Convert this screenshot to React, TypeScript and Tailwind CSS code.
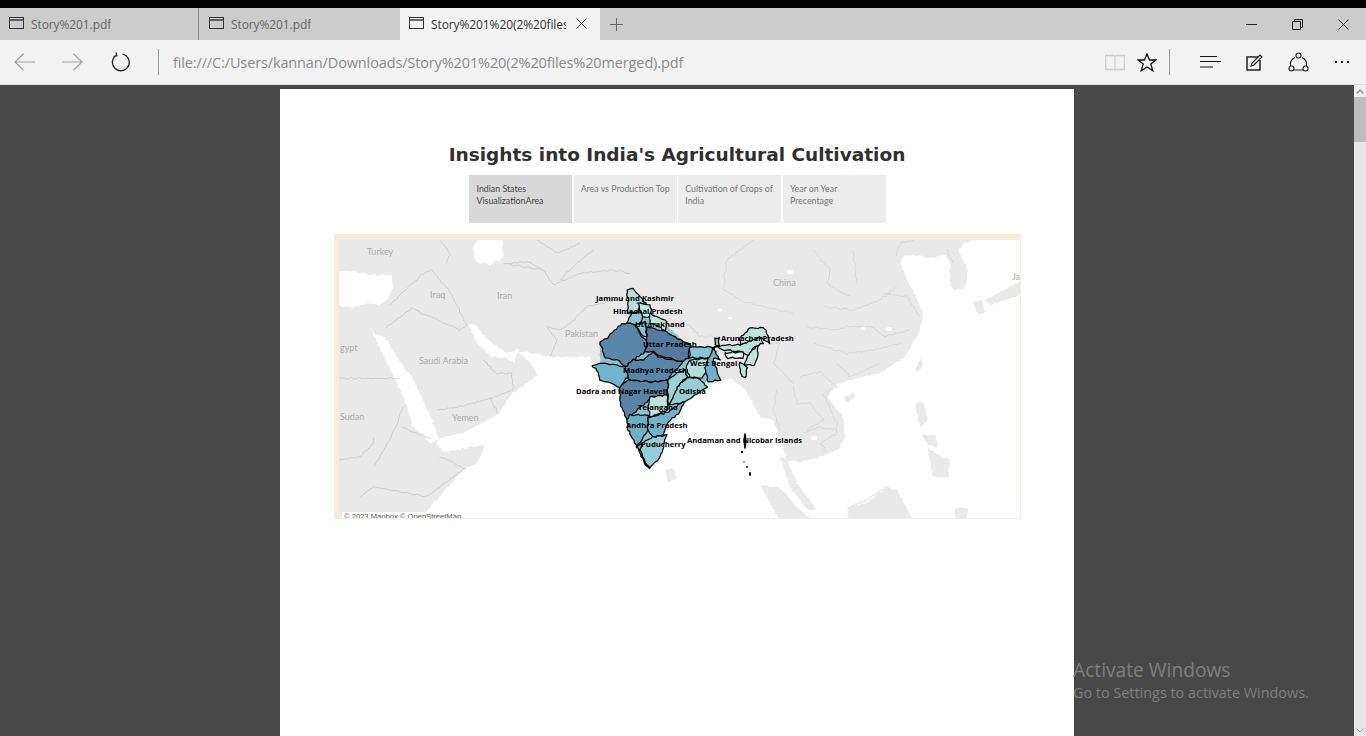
// breaks edges into short steps and pushes them through a smooth field, so coasts look hand traced
function wiggle(pts: string, amp = 1, ox = 0, oy = 0, k = 1) {
  const p = pts.split(' ').map(s => {
    const [x, y] = s.split(',').map(Number)
    return [ox + x * k, oy + y * k]
  })
  const out: string[] = []
  for (let i = 0; i < p.length - 1; i++) {
    const [x1, y1] = p[i]
    const [x2, y2] = p[i + 1]
    const n = Math.max(1, Math.round(Math.hypot(x2 - x1, y2 - y1) / 2.5))
    for (let j = 0; j < n; j++) {
      const x = x1 + ((x2 - x1) * j) / n
      const y = y1 + ((y2 - y1) * j) / n
      const dx = Math.sin(x * 1.3 + y * 0.7) + 0.6 * Math.sin(y * 2.1 - x * 0.4)
      const dy = Math.cos(y * 1.1 - x * 0.8) + 0.6 * Math.cos(x * 1.9 + y * 0.3)
      out.push(`${(x + dx * amp * 0.6).toFixed(1)},${(y + dy * amp * 0.6).toFixed(1)}`)
    }
  }
  const [lx, ly] = p[p.length - 1]
  out.push(`${lx},${ly}`)
  return out.join(' ')
}

const closed = (pts: string) => `${pts} ${pts.split(' ')[0]}`

const indiaBacking = '630,295 650,310 665,325 690,347 715,350 708,380 685,402 668,423 663,437 650,466 640,450 627,420 620,390 600,375 600,345 627,325'

const states: { fill: string; pts: string }[] = [
  { fill: '#b6dfdb', pts: '627,290 633,288 640,297 647,305 640,303 638,312 628,313 628,300' },
  { fill: '#c4e6e1', pts: '638,303 650,305 652,317 642,317' },
  { fill: '#8fc6d2', pts: '627,323 632,313 642,312 642,322 637,325' },
  { fill: '#c0e4df', pts: '650,313 667,322 665,330 650,323' },
  { fill: '#8cc3d0', pts: '635,325 645,322 647,337 642,335' },
  { fill: '#5b86a7', pts: '600,342 607,338 620,325 627,323 635,325 642,337 647,340 645,352 633,360 625,367 617,360 605,358' },
  { fill: '#557a9d', pts: '647,327 667,332 690,345 688,358 682,362 658,355 653,352 645,352 647,343' },
  { fill: '#5a85a6', pts: '628,377 625,367 633,360 643,360 653,352 658,357 683,362 673,373 668,380 653,382 628,380' },
  { fill: '#72b4cb', pts: '592,366 600,363 617,365 625,367 628,377 620,387 610,383 600,380 597,370' },
  { fill: '#5a83a4', pts: '620,387 628,380 653,382 668,380 668,395 653,397 637,410 630,417 627,420 620,403' },
  { fill: '#bfe2dd', pts: '650,397 667,395 668,410 650,417 648,405' },
  { fill: '#70aec6', pts: '627,420 630,415 648,415 648,430 642,440 637,447 628,430' },
  { fill: '#74b2c9', pts: '648,418 668,412 685,400 680,412 667,423 663,435 653,437 648,430' },
  { fill: '#99cdd6', pts: '642,443 653,437 667,435 660,457 650,468 645,462 640,450' },
  { fill: '#72b0c6', pts: '637,447 642,443 640,450 645,462 650,468 646,466' },
  { fill: '#9ed0d6', pts: '668,380 677,373 685,370 687,377 677,387 673,400 668,405' },
  { fill: '#99ccd4', pts: '677,387 687,378 698,378 707,387 685,402 670,405' },
  { fill: '#8cc3d0', pts: '690,347 715,347 712,358 690,358' },
  { fill: '#b4dfdc', pts: '686,368 690,360 712,358 708,367 702,378 690,377' },
  { fill: '#6faec6', pts: '713,348 720,360 713,358 720,380 708,382 705,368' },
  { fill: '#8cc3d0', pts: '715,338 719,338 719,345 715,345' },
  { fill: '#bbe3de', pts: '715,347 725,345 740,345 760,337 763,343 755,347 748,355 743,352 725,350' },
  { fill: '#c0e5df', pts: '740,345 740,338 750,328 765,328 770,343 760,337' },
  { fill: '#e6f3f1', pts: '725,353 743,352 743,358 727,358' },
  { fill: '#c4e6e1', pts: '748,355 758,345 758,353 755,365 745,365' },
  { fill: '#bbe3de', pts: '740,362 748,367 745,378 742,377 740,370' },
]

const seas = [
  '440,438 463,433 497,415 513,393 538,375 530,362 518,352 527,352 550,357 590,357 593,365 600,370 622,400 640,450 650,470 665,435 685,400 708,385 720,382 730,378 743,387 748,395 760,417 773,420 777,430 787,460 800,462 817,458 837,450 845,437 843,417 827,397 835,385 850,380 880,373 905,357 920,330 923,313 915,295 907,280 900,262 905,256 915,255 930,258 945,255 950,263 950,280 953,290 965,288 968,270 958,250 965,243 973,240 985,230 1030,230 1030,530 418,530 423,518 430,507 463,470 477,463 485,445 443,452 437,443',
  '330,272 350,271 375,275 392,275 393,288 386,300 380,305 368,303 352,308 330,303',
  '369,325 375,335 385,337 400,362 412,377 425,405 437,432 438,440 430,443 412,425 405,400 393,375',
  '473,250 480,232 503,232 503,258 490,265 476,262',
  '468,323 476,326 490,342 504,352 515,352 518,348 515,362 505,358 492,357 478,345',
]

const islands = [
  '973,302 982,300 985,312 978,315',
  '985,300 1000,292 1030,276 1030,292 1005,300 990,305',
  '915,370 921,358 923,363 918,372',
  '843,398 855,392 855,397 847,403',
  '915,403 923,402 928,420 920,427',
  '922,435 935,435 938,447 928,445',
  '927,447 943,457 950,460 948,477 933,477',
  '847,507 867,503 887,487 897,490 918,530 850,530',
  '760,485 780,488 800,510 823,530 785,530',
  '780,457 787,460 797,483 817,510 808,510 790,487',
  '665,470 673,468 677,478 668,482',
  '955,508 968,508 965,530 955,530',
]

const westBorders = [
  '180,225 215,190 280,130 305,120 360,185 410,285',
  '165,295 245,235 390,300 410,285',
  '520,100 640,120 670,165 750,130 850,120 900,130',
  '650,290 690,300 720,280 770,230 880,205',
  '650,290 680,330 660,380',
  '28,445 205,445',
  '130,620 130,640 90,680 28,690',
  '130,710 180,630 220,530',
  '210,590 300,625',
  '330,680 405,715 290,800 130,770 90,800',
  '320,540 390,530 480,505 550,480 545,430 500,430 460,390',
  '480,505 505,550',
  '330,30 360,70 350,100',
  '540,100 590,95 640,120',
  '790,60 740,100 690,150',
  '620,30 680,70 750,40',
]

const eastBorders = [
  '0,265 30,290 60,320 110,320',
  '270,340 300,340 280,400 340,460',
  '290,480 280,540 300,600',
  '360,440 420,425 470,470 430,490 470,580 470,610 420,640 440,665',
  '370,610 420,590 460,600',
  '340,470 350,520 390,520 430,570 380,600',
  '140,90 180,60 220,30',
  '140,90 130,180 190,215 340,250',
  '400,60 450,120 440,160 510,200',
  '520,60 530,160',
  '430,230 520,240 600,210 650,170',
  '380,290 470,300 500,290 580,290 610,320 690,300',
  '400,340 500,370 580,360 660,340',
  '470,400 510,440 600,400',
  '610,190 680,200 720,260',
  '650,80 660,40 700,30',
  '800,60 820,100',
  '510,830 560,810 620,770',
]

const labels: { text: string; cls: string }[] = [
  { text: 'Jammu and Kashmir', cls: 'left-[257px] top-[53px]' },
  { text: 'Himachal Pradesh', cls: 'left-[274px] top-[66px]' },
  { text: 'Uttarakhand', cls: 'left-[296px] top-[79px]' },
  { text: 'Uttar Pradesh', cls: 'left-[304px] top-[99px]' },
  { text: 'Arunachal Pradesh', cls: 'left-[382px] top-[93px]' },
  { text: 'West Bengal', cls: 'left-[351px] top-[118px]' },
  { text: 'Madhya Pradesh', cls: 'left-[284px] top-[125px]' },
  { text: 'Odisha', cls: 'left-[340px] top-[146px]' },
  { text: 'Dadra and Nagar Haveli', cls: 'left-[237px] top-[146px]' },
  { text: 'Telangana', cls: 'left-[299px] top-[162px]' },
  { text: 'Andhra Pradesh', cls: 'left-[287px] top-[180px]' },
  { text: 'Puducherry', cls: 'left-[302px] top-[199px]' },
  { text: 'Andaman and Nicobar Islands', cls: 'left-[348px] top-[195px]' },
]

const countries: { text: string; cls: string }[] = [
  { text: 'Turkey', cls: 'left-[28px] top-[6px]' },
  { text: 'Iraq', cls: 'left-[91px] top-[49px]' },
  { text: 'Iran', cls: 'left-[158px] top-[50px]' },
  { text: 'Pakistan', cls: 'left-[226px] top-[88px]' },
  { text: 'gypt', cls: 'left-[1px] top-[102px]' },
  { text: 'Saudi Arabia', cls: 'left-[80px] top-[115px]' },
  { text: 'Sudan', cls: 'left-[1px] top-[171px]' },
  { text: 'Yemen', cls: 'left-[113px] top-[172px]' },
  { text: 'China', cls: 'left-[434px] top-[37px]' },
  { text: 'Ja', cls: 'left-[673px] top-[31px]' },
]

function TabIcon() {
  return (
    <svg width="15" height="12" viewBox="0 0 15 12" className="shrink-0 -mt-[2px]">
      <rect x="0.5" y="0.5" width="14" height="11" fill="none" stroke="#333" />
      <path d="M1 3h13" stroke="#333" strokeWidth="1.4" />
    </svg>
  )
}

function Tab({ title, active, divider }: { title: string; active?: boolean; divider?: boolean }) {
  return (
    <div className={`flex items-center h-8 ${active ? 'w-[200px] pl-[9px] bg-[#f2f2f2] text-[#333]' : 'text-[#666]'} ${divider ? 'w-[202px] pl-[10px] border-l border-[#8a8a8a]' : ''} ${!active && !divider ? 'w-[198px] pl-[9px]' : ''}`}>
      <TabIcon />
      <span className={`ml-[7px] mt-[2px] text-[12px] tracking-[-0.1px] whitespace-nowrap overflow-hidden ${active ? 'w-[135px]' : ''}`}>{title}</span>
      {active && (
        <svg width="11" height="11" viewBox="0 0 11 11" className="ml-[10px] -mt-[1px]">
          <path d="M.5.5l10 10M10.5.5l-10 10" stroke="#444" />
        </svg>
      )}
    </div>
  )
}

function MapArea() {
  return (
    <div className="relative w-[687px] h-[285px] mt-[11px] ml-[54px] border-r border-b border-[#f5ecdc] border-t-[6px] border-l-[5px] overflow-hidden bg-white">
      <svg className="block w-[681px] h-[278px]" viewBox="339 240 681 278">
        <rect x="339" y="240" width="681" height="278" fill="#e9e9e9" />
        <g className="blur-[0.5px]">
          <g fill="#fff">
            {seas.map((s, i) => (
              <polygon key={i} points={wiggle(closed(s), 1.2)} />
            ))}
            <ellipse cx="720" cy="310" rx="2.5" ry="1.5" />
            <ellipse cx="730" cy="318" rx="2.5" ry="1" />
            <ellipse cx="790" cy="272" rx="3" ry="2" />
            <ellipse cx="863" cy="328" rx="2" ry="2" />
            <ellipse cx="889" cy="329" rx="3" ry="2" />
            <ellipse cx="814" cy="438" rx="3" ry="2" />
          </g>
          <g fill="#e9e9e9">
            {islands.map((s, i) => (
              <polygon key={i} points={wiggle(closed(s), 1)} />
            ))}
          </g>
          <g fill="none" stroke="#c0c0c0" strokeWidth="0.7">
            {westBorders.map((s, i) => (
              <polyline key={i} points={wiggle(s, 0.9, 330, 230, 1 / 3)} />
            ))}
          </g>
          <g fill="none" stroke="#cdcdcd" strokeWidth="0.7">
            {eastBorders.map((s, i) => (
              <polyline key={i} points={wiggle(s, 1.1, 680, 230, 1 / 3)} />
            ))}
          </g>
        </g>
        {/* India */}
        <polygon points={wiggle(closed(indiaBacking), 0.9)} fill="#8cc3d0" />
        <g stroke="#000" strokeWidth="1.2" strokeLinejoin="round">
          {states.map((s, i) => (
            <polygon key={i} points={wiggle(closed(s.pts), 0.9)} fill={s.fill} />
          ))}
        </g>
        <g fill="#000">
          <ellipse cx="745" cy="441" rx="1.4" ry="8" />
          <circle cx="742" cy="452" r="1.2" />
          <circle cx="744" cy="462" r="0.7" />
          <circle cx="747" cy="467" r="0.9" />
          <ellipse cx="750" cy="474" rx="1.2" ry="2" />
        </g>
      </svg>
      {countries.map(c => (
        <span key={c.text} className={`absolute ${c.cls} font-['Lato',sans-serif] text-[9px] leading-3 text-[#ababab] whitespace-nowrap`}>
          {c.text}
        </span>
      ))}
      {labels.map(l => (
        <span key={l.text} className={`absolute ${l.cls} font-['Open_Sans',sans-serif] font-bold text-[7.7px] leading-[10px] text-black whitespace-nowrap`}>
          {l.text}
        </span>
      ))}
      <span className="absolute left-[3px] top-[272px] bg-white pl-[2px] pr-[3px] font-['Liberation_Sans',sans-serif] text-[7.6px] leading-[10px] text-[#555] whitespace-nowrap">
        © 2023 Mapbox © OpenStreetMap
      </span>
    </div>
  )
}

export default function App() {
  return (
    <div className="relative flex flex-col w-[1366px] h-[736px] overflow-hidden bg-[#484848] font-['Open_Sans',sans-serif]">
      <div className="h-2 bg-black" />

      {/* tab strip */}
      <div className="flex items-center h-8 bg-[#cccccc]">
        <Tab title="Story%201.pdf" />
        <Tab title="Story%201.pdf" divider />
        <Tab title="Story%201%20(2%20files%20merged).pdf" active />
        <svg width="13" height="13" viewBox="0 0 13 13" className="ml-[10px]">
          <path d="M6.5 0v13M0 6.5h13" stroke="#666" />
        </svg>
        <div className="flex ml-auto">
          <div className="flex items-center justify-center w-[46px] h-8">
            <svg width="11" height="11" viewBox="0 0 11 11"><path d="M0 5.5h11" stroke="#222" /></svg>
          </div>
          <div className="flex items-center justify-center w-[46px] h-8">
            <svg width="11" height="11" viewBox="0 0 11 11" fill="none" stroke="#222"><path d="M.5 2.500h8v8h-8zM2.500 2.500v-2h8v8h-2" /></svg>
          </div>
          <div className="flex items-center justify-center w-[46px] h-8">
            <svg width="11" height="11" viewBox="0 0 11 11"><path d="M.5.5l10 10M10.5.5l-10 10" stroke="#222" /></svg>
          </div>
        </div>
      </div>

      {/* address bar */}
      <div className="flex items-center h-[45px] bg-[#f2f2f2] border-b border-[#dcdcdc]">
        <div className="flex items-center justify-center w-12">
          <svg width="21" height="18" viewBox="0 0 21 18" fill="none" stroke="#a0a0a0" strokeWidth="1.2"><path d="M21 9H1M9.500 .8L1 9l8.500 8.200" /></svg>
        </div>
        <div className="flex items-center justify-center w-12">
          <svg width="21" height="18" viewBox="0 0 21 18" fill="none" stroke="#a0a0a0" strokeWidth="1.2"><path d="M0 9h20M11.500 .8L20 9l-8.500 8.200" /></svg>
        </div>
        <div className="flex items-center justify-center w-12">
          <svg width="20" height="20" viewBox="0 0 20 20" fill="none" stroke="#222" strokeWidth="1.3"><path d="M6.500 3.200A8.400 8.400 0 1 0 12.500 2.200M6 .5l.8 3.300-3.300.8" /></svg>
        </div>
        <div className="w-px h-[26px] ml-[14px] bg-[#9a9a9a]" />
        <span className="ml-[14px] mt-[2px] text-[14.5px] tracking-[-0.13px] text-[#8a8a8a] whitespace-nowrap">file:///C:/Users/kannan/Downloads/Story%201%20(2%20files%20merged).pdf</span>
        <div className="flex items-center ml-auto pr-[2px]">
          <div className="flex items-center justify-center w-8">
            <svg width="20" height="17" viewBox="0 0 20 17" fill="none" stroke="#cfcfcf" strokeWidth="1.3"><path d="M.6 1.500h8.200l1.200 1 1.200-1h8.200v14H11.200l-1.200 1-1.200-1H.6zM10 2.500v13" /></svg>
          </div>
          <div className="flex items-center justify-center w-8">
            <svg width="20" height="19" viewBox="0 0 20 19" fill="none" stroke="#111" strokeWidth="1.3"><path d="M10 1l2.500 6h6.500l-5.200 4 2 6.800L10 14l-5.800 3.800 2-6.800L1 7h6.500z" /></svg>
          </div>
          <div className="w-px h-[26px] ml-[6px] bg-[#9a9a9a]" />
          <div className="flex items-center justify-center w-11 ml-[18px]">
            <svg width="21" height="14" viewBox="0 0 21 14" stroke="#111" strokeWidth="1.2"><path d="M0 1.500h17M0 6.500h21M0 12h13" /></svg>
          </div>
          <div className="flex items-center justify-center w-11">
            <svg width="17" height="17" viewBox="0 0 17 17" fill="none" stroke="#222"><path d="M12 3H1v13h13V6" strokeWidth="1.500" /><path d="M5 12l1-3 8-8 2 2-8 8z" fill="#f2f2f2" strokeWidth="1.200" /></svg>
          </div>
          <div className="flex items-center justify-center w-11">
            <svg width="21" height="21" viewBox="0 0 21 21" fill="none" stroke="#222" strokeWidth="1.100"><path d="M7 5.500a8 8 0 0 0-4.500 8.500M18.500 14A8 8 0 0 0 14 5.500M6 18h9" /><circle cx="10.500" cy="3.500" r="2.500" /><circle cx="3.500" cy="16.500" r="2.500" /><circle cx="17.500" cy="16.500" r="2.500" /></svg>
          </div>
          <div className="flex items-center justify-center w-11 gap-[4px]">
            <div className="w-[2px] h-[2px] bg-[#222]" />
            <div className="w-[2px] h-[2px] bg-[#222]" />
            <div className="w-[2px] h-[2px] bg-[#222]" />
          </div>
        </div>
      </div>

      {/* pdf viewer */}
      <div className="flex flex-1 min-h-0">
        <div className="flex flex-1 justify-center pt-1">
          <div className="w-[794px] bg-white">
            <h1 className="mt-[54px] text-center font-['DejaVu_Sans',sans-serif] font-bold text-[18.5px] leading-6 text-[#2f2f2f]">
              Insights into India's Agricultural Cultivation
            </h1>
            <div className="flex gap-[1.67px] mt-[8px] ml-[189px] font-['Lato',sans-serif] text-[8.8px] leading-3">
              <div className="w-[103px] h-12 pl-[7.500px] pt-[8px] bg-[#d9d9d9] text-[#444]">Indian States<br />VisualizationArea</div>
              <div className="w-[103px] h-12 pl-[7px] pt-[8px] bg-[#ececec] text-[#777]">Area vs Production Top</div>
              <div className="w-[103px] h-12 pl-[7px] pt-[8px] bg-[#ececec] text-[#777]">Cultivation of Crops of<br />India</div>
              <div className="w-[103px] h-12 pl-[7px] pt-[8px] bg-[#ececec] text-[#777]">Year on Year<br />Precentage</div>
            </div>
            <MapArea />
          </div>
        </div>
        <div className="flex flex-col items-center justify-between w-3 bg-[#e8e8e8]">
          <div className="flex flex-col w-full">
            <div className="flex items-center justify-center h-3 bg-[#f0f0f0]">
              <svg width="8" height="5" viewBox="0 0 8 5" fill="none" stroke="#888" strokeWidth="1.200"><path d="M.5 4.500L4 1l3.500 3.500" /></svg>
            </div>
            <div className="h-[45px] bg-[#bdbdbd]" />
          </div>
          <svg width="8" height="5" viewBox="0 0 8 5" fill="none" stroke="#999" className="mb-[3px]"><path d="M.5.500L4 4l3.500-3.500" /></svg>
        </div>
      </div>

      {/* watermark */}
      <div className="absolute left-[1073px] top-[657px] text-[#7e7e7e] whitespace-nowrap">
        <div className="text-[19.2px] leading-[25px]">Activate Windows</div>
        <div className="text-[14.400px] leading-5 mt-[1px]">Go to Settings to activate Windows.</div>
      </div>
    </div>
  )
}
